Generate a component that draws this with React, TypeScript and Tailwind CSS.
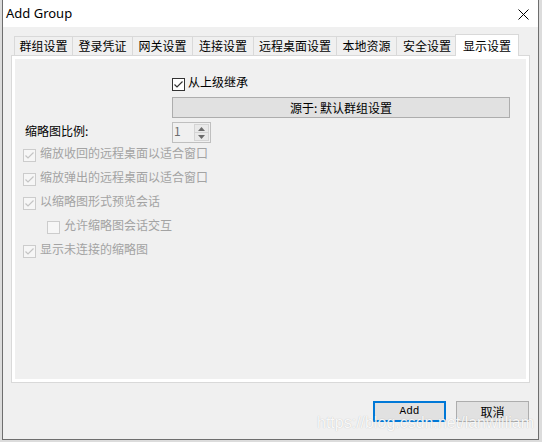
import React from "react"

const tabs = [
    { label: "群组设置", w: "w-[58px]" },
    { label: "登录凭证", w: "w-[60px]" },
    { label: "网关设置", w: "w-[60px]" },
    { label: "连接设置", w: "w-[61px]" },
    { label: "远程桌面设置", w: "w-[83px]" },
    { label: "本地资源", w: "w-[60px]" },
    { label: "安全设置", w: "w-[61px]" },
]

function CheckBox({ checked, disabled }: { checked?: boolean; disabled?: boolean }) {
    const stroke = disabled ? "#c4c4c4" : "#333333"
    return (
        <span
            className={
                disabled
                    ? "w-[13px] h-[13px] shrink-0 border border-[#cccccc] bg-[#f6f6f6] flex items-center justify-center"
                    : "w-[13px] h-[13px] shrink-0 border border-[#333333] bg-white flex items-center justify-center"
            }
        >
            {checked && (
                <svg width="11" height="11" viewBox="0 0 11 11">
                    <polyline points="1.5,5.5 4,8 9.5,2.5" fill="none" stroke={stroke} strokeWidth="1.2" />
                </svg>
            )}
        </span>
    )
}

function OptionRow({ label, checked, indent }: { label: string; checked?: boolean; indent?: boolean }) {
    return (
        <div className={indent ? "h-[24px] flex items-center gap-[4px] pl-[32px]" : "h-[24px] flex items-center gap-[4px] pl-[8px]"}>
            <CheckBox checked={checked} disabled />
            <span className="mb-[4px] text-[#a3a3a3] leading-none">{label}</span>
        </div>
    )
}

export default function App() {
    return (
        <div className="relative w-[542px] h-[442px] bg-[#dcdcdc] pl-[2px] font-['Noto_Sans_CJK_SC',sans-serif] text-[12px] text-black">
            <div className="w-[537px] h-[440px] bg-[#f0f0f0] border-x border-b border-[#6e6e6e] flex flex-col">
                {/* Title bar */}
                <div className="h-[27px] shrink-0 bg-white flex items-center justify-between pl-[3px] pr-[9px]">
                    <span className="font-['Noto_Sans',sans-serif] text-[13px] leading-none">Add Group</span>
                    <svg width="11" height="11" viewBox="0 0 11 11" className="mt-[2px]">
                        <path d="M0.5 0.5 L10.5 10.5 M10.5 0.5 L0.5 10.5" stroke="#000" strokeWidth="1" />
                    </svg>
                </div>

                {/* Tabs */}
                <div className="mt-[7px] h-[21px] shrink-0 flex items-end pl-[11px]">
                    {tabs.map((t) => (
                        <div
                            key={t.label}
                            className={`${t.w} h-[19px] border-l border-t border-[#d9d9d9] flex items-center justify-center leading-none`}
                        >
                            {t.label}
                        </div>
                    ))}
                    <div className="relative z-10 -ml-[2px] -mb-px w-[64px] h-[22px] border-l border-t border-r border-[#d9d9d9] bg-white flex items-center justify-center leading-none">
                        显示设置
                    </div>
                </div>

                {/* Panel */}
                <div className="ml-[8px] w-[519px] h-[328px] shrink-0 border border-[#d9d9d9] bg-white p-[3px]">
                    <div className="h-full bg-[#f0f0f0] flex flex-col">
                        <div className="mt-[13px] h-[24px] flex items-center gap-[3px] pl-[157px]">
                            <CheckBox checked />
                            <span className="mb-[4px] leading-none">从上级继承</span>
                        </div>
                        <div className="mt-[1px] ml-[157px] w-[338px] h-[21px] border border-[#adadad] bg-[#e1e1e1] flex items-center justify-center leading-none">
                            源于: 默认群组设置
                        </div>
                        <div className="mt-[4px] h-[21px] flex items-center">
                            <span className="w-[157px] pl-[10px] mb-[4px] leading-none">缩略图比例:</span>
                            <div className="w-[39px] h-[21px] border border-[#bfbfbf] bg-[#f0f0f0] flex">
                                <span className="flex-1 pl-[1px] pt-[2px] leading-none text-[#6d6d6d]">1</span>
                                <div className="w-[15px] my-[1px] mr-[1px] flex flex-col border border-[#d4d4d4]">
                                    <div className="flex-1 flex items-center justify-center border-b border-[#d4d4d4] bg-[#e9e9e9]">
                                        <svg width="7" height="4" viewBox="0 0 7 4">
                                            <polygon points="3.5,0 7,4 0,4" fill="#6b6b6b" />
                                        </svg>
                                    </div>
                                    <div className="flex-1 flex items-center justify-center bg-[#e9e9e9]">
                                        <svg width="7" height="4" viewBox="0 0 7 4">
                                            <polygon points="0,0 7,0 3.5,4" fill="#6b6b6b" />
                                        </svg>
                                    </div>
                                </div>
                            </div>
                        </div>
                        <OptionRow label="缩放收回的远程桌面以适合窗口" checked />
                        <OptionRow label="缩放弹出的远程桌面以适合窗口" checked />
                        <OptionRow label="以缩略图形式预览会话" checked />
                        <OptionRow label="允许缩略图会话交互" indent />
                        <OptionRow label="显示未连接的缩略图" checked />
                    </div>
                </div>

                {/* Buttons */}
                <div className="mt-[18px] flex justify-end gap-[10px] pr-[9px]">
                    <button className="w-[73px] h-[21px] border-2 border-[#0078d7] bg-[#e1e1e1] flex items-center justify-center font-['Liberation_Mono',monospace] text-[11px] leading-none">
                        Add
                    </button>
                    <button className="w-[73px] h-[21px] border border-[#adadad] bg-[#e1e1e1] flex items-center justify-center leading-none">
                        取消
                    </button>
                </div>
            </div>

            {/* watermark */}
            <span className="absolute left-[317px] top-[415px] font-['Liberation_Sans',sans-serif] text-[16px] leading-none text-white/90 [text-shadow:0_0_1px_rgba(0,0,0,0.25)] pointer-events-none">
                https://blog.csdn.net/lanwilliam
            </span>
        </div>
    )
}
